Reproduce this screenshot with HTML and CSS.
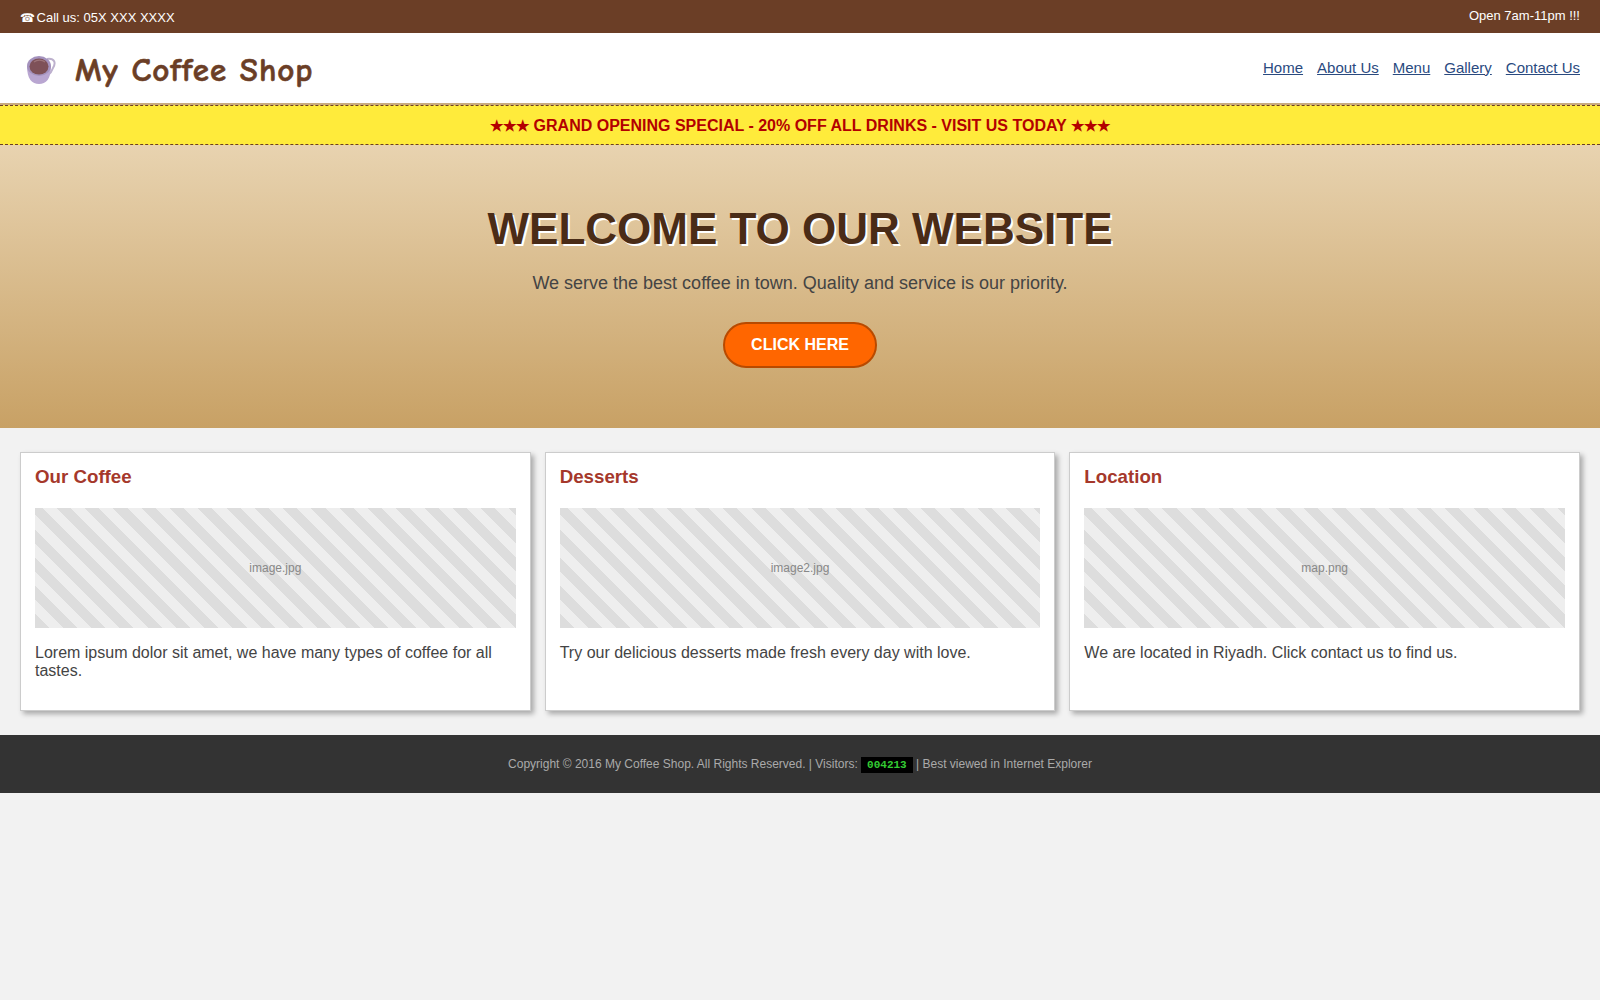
FILE: index.html
```html
<!DOCTYPE html>
<html lang="en">
<head>
    <meta charset="UTF-8">
    <title>My Coffee Shop</title>
    <link rel="stylesheet" href="styles.css">
</head>
<body>
    <div class="topbar">
        <span class="call"><span class="phone">&#9742;</span> Call us: 05X XXX XXXX</span>
        <span class="hours">Open 7am-11pm !!!</span>
    </div>
    <header class="header">
        <div class="logo">
            <svg class="cup" width="30" height="30" viewBox="0 0 30 30" aria-hidden="true">
                <path d="M21 4 C29 3 30 8 27 13 C26 16 25 18 22 20" fill="none" stroke="#bdb1cd" stroke-width="2"/>
                <path d="M1 11 C1 24 6 29 13 29 C20 29 25 24 25 11 Z" fill="#b9a6d1"/>
                <ellipse cx="13" cy="11" rx="12" ry="10" fill="#a492bd"/>
                <ellipse cx="13" cy="11.5" rx="9.5" ry="8" fill="#7e5158"/>
                <path d="M8 7 C11 4.500 16 4.500 19 7" fill="none" stroke="#9c7478" stroke-width="1.200"/>
            </svg>
            <span class="logo-text">My Coffee Shop</span>
        </div>
        <nav class="nav">
            <a href="#">Home</a>
            <a href="#">About Us</a>
            <a href="#">Menu</a>
            <a href="#">Gallery</a>
            <a href="#">Contact Us</a>
        </nav>
    </header>
    <div class="promo"><span class="stars">&#9733;&#9733;&#9733;</span> GRAND OPENING SPECIAL - 20% OFF ALL DRINKS - VISIT US TODAY <span class="stars">&#9733;&#9733;&#9733;</span></div>
    <section class="hero">
        <h1>WELCOME TO OUR WEBSITE</h1>
        <p>We serve the best coffee in town. Quality and service is our priority.</p>
        <a class="btn" href="#">CLICK HERE</a>
    </section>
    <main class="cards">
        <div class="card">
            <h3>Our Coffee</h3>
            <div class="placeholder">image.jpg</div>
            <p>Lorem ipsum dolor sit amet, we have many types of coffee for all tastes.</p>
        </div>
        <div class="card">
            <h3>Desserts</h3>
            <div class="placeholder">image2.jpg</div>
            <p>Try our delicious desserts made fresh every day with love.</p>
        </div>
        <div class="card">
            <h3>Location</h3>
            <div class="placeholder">map.png</div>
            <p>We are located in Riyadh. Click contact us to find us.</p>
        </div>
    </main>
    <footer class="footer">
        Copyright &copy; 2016 My Coffee Shop. All Rights Reserved. | Visitors: <span class="counter">004213</span> | Best viewed in Internet Explorer
    </footer>
</body>
</html>
```

FILE: styles.css
```css
body {
    margin: 0;
    background-color: #f2f2f2;
    font-family: "Liberation Sans", Arial, sans-serif;
    color: #333;
}

.topbar {
    display: flex;
    justify-content: space-between;
    align-items: center;
    height: 33px;
    padding: 0 20px;
    background-color: #6b3e26;
    color: #fff;
    font-size: 13px;
    box-sizing: border-box;
}

.call {
    margin-top: 1px;
}

.phone {
    font-size: 12px;
    margin-right: -2px;
}

.hours {
    margin-top: -3px;
}

.header {
    display: flex;
    justify-content: space-between;
    align-items: center;
    height: 70px;
    padding: 0 20px;
    background-color: #fff;
    border-bottom: 2px solid #c8a97e;
}

.logo {
    display: flex;
    align-items: center;
}

.cup {
    margin: 4px 19px 0 6px;
}

.logo-text {
    margin-top: 4px;
    font-family: "Comic Sans MS", "Comic Neue", cursive;
    font-size: 33px;
    font-weight: bold;
    color: #6b3e26;
    letter-spacing: 1px;
    -webkit-text-stroke: 0.6px #6b3e26;
}

.nav {
    display: flex;
    gap: 14px;
    margin-top: -2px;
}

.nav a {
    color: #2a4a7f;
    font-size: 15px;
}

.promo {
    height: 38px;
    line-height: 40px;
    text-align: center;
    background-color: #ffeb3b;
    border-top: 1px dashed #6b3e26;
    border-bottom: 1px dashed #6b3e26;
    color: #b30000;
    font-size: 16px;
    font-weight: bold;
}

.stars {
    font-size: 15px;
}

.hero {
    height: 283px;
    box-sizing: border-box;
    padding-top: 58px;
    text-align: center;
    background: linear-gradient(to bottom, #e8d3b0, #c8a165);
}

.hero h1 {
    margin: 0;
    font-size: 44px;
    line-height: 52px;
    color: #4a2c17;
    text-shadow: 2px 2px 0 #fff;
}

.hero p {
    margin: 17px 0 0;
    font-size: 18px;
    line-height: 22px;
    color: #444;
}

.btn {
    display: inline-block;
    margin-top: 28px;
    padding: 12px 26px;
    background-color: #ff6600;
    border: 2px solid #b84a00;
    border-radius: 25px;
    color: #fff;
    font-size: 16px;
    font-weight: bold;
    text-decoration: none;
}

.cards {
    display: flex;
    gap: 14px;
    padding: 24px 20px;
}

.card {
    flex: 1;
    padding: 13px 14px 14px;
    background-color: #fff;
    border: 1px solid #ccc;
    box-shadow: 3px 3px 5px rgba(0, 0, 0, 0.3);
}

.card h3 {
    margin: 0 0 20px;
    font-size: 18.72px;
    line-height: 22px;
    color: #a5382b;
}

.placeholder {
    display: flex;
    align-items: center;
    justify-content: center;
    height: 120px;
    background: repeating-linear-gradient(45deg, #ddd, #ddd 10px, #eee 10px, #eee 20px);
    color: #888;
    font-size: 12px;
}

.card p {
    margin: 16px 0 16px;
    min-height: 36px;
    font-size: 16px;
    line-height: 18px;
    color: #444;
}

.footer {
    height: 58px;
    line-height: 58px;
    text-align: center;
    background-color: #333;
    color: #aaa;
    font-size: 12px;
}

.counter {
    padding: 2px 6px;
    background-color: #000;
    color: #3c3;
    font-family: "Liberation Mono", monospace;
    font-weight: bold;
    font-size: 11px;
}
```
